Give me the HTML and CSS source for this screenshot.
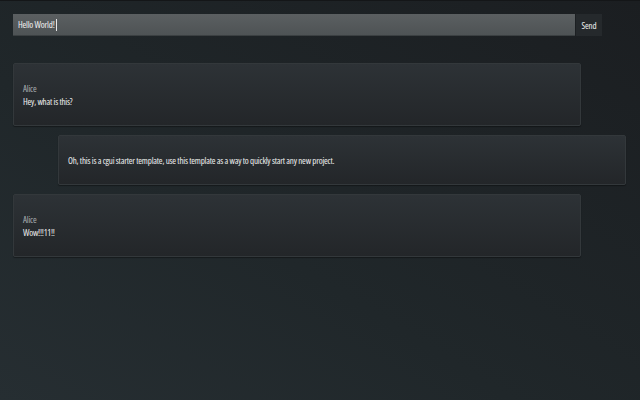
FILE: index.html
```html
<!DOCTYPE html>
<html>
<head>
<meta charset="utf-8">
<link rel="stylesheet" href="styles.css">
</head>
<body>
<div class="app">
  <form class="composer">
    <div class="input"><span class="input-text">Hello World!</span><span class="caret"></span></div>
    <button class="send" type="button">Send</button>
  </form>
  <div class="messages">
    <div class="msg">
      <div class="author">Alice</div>
      <div class="body">Hey, what is this?</div>
    </div>
    <div class="msg mine">
      <div class="body">Oh, this is a cgui starter template, use this template as a way to quickly start any new project.</div>
    </div>
    <div class="msg">
      <div class="author">Alice</div>
      <div class="body">Wow!!!11!!</div>
    </div>
  </div>
</div>
</body>
</html>
```
FILE: styles.css
```css
html, body {
  margin: 0;
  height: 100%;
}
body {
  background: linear-gradient(to top right, #262e32 0%, #20272a 40%, #1b1e21 100%);
  border-top: 1px solid #141618;
  box-sizing: border-box;
  font-family: "Open Sans", sans-serif;
  font-stretch: 75%;
  font-size: 9px;
  letter-spacing: -0.2px;
  color: #ececec;
}
.app {
  padding: 13px 14px 0 13px;
  display: flex;
  flex-direction: column;
}
.composer {
  margin: 0;
  display: grid;
  grid-template-columns: 562px 26px;
  gap: 1px;
  height: 22px;
}
.input {
  background: linear-gradient(to bottom, #5b5f61, #4e5355);
  border-bottom: 1px solid #3b4042;
  display: flex;
  align-items: center;
  padding-left: 5px;
  color: #f2f2f2;
}
.caret {
  display: inline-block;
  width: 1px;
  height: 12px;
  background: #e8e8e8;
  margin-left: 1px;
}
.send {
  background: #25292c;
  border: none;
  color: #f0f0f0;
  font: inherit;
  letter-spacing: inherit;
  padding: 0;
  cursor: pointer;
}
.messages {
  margin-top: 27px;
  display: flex;
  flex-direction: column;
  gap: 9px;
}
.msg {
  width: 568px;
  box-sizing: border-box;
  padding: 18px 9px 17px;
  border: 1px solid #33383b;
  border-radius: 2px;
  background: linear-gradient(to bottom, #2d3236, #232629);
  box-shadow: 0 1px 1px rgba(0, 0, 0, 0.35);
  line-height: 13px;
}
.msg.mine {
  align-self: flex-end;
}
.author {
  color: #a9adb0;
}
.body {
  color: #f0f0f0;
}
```
